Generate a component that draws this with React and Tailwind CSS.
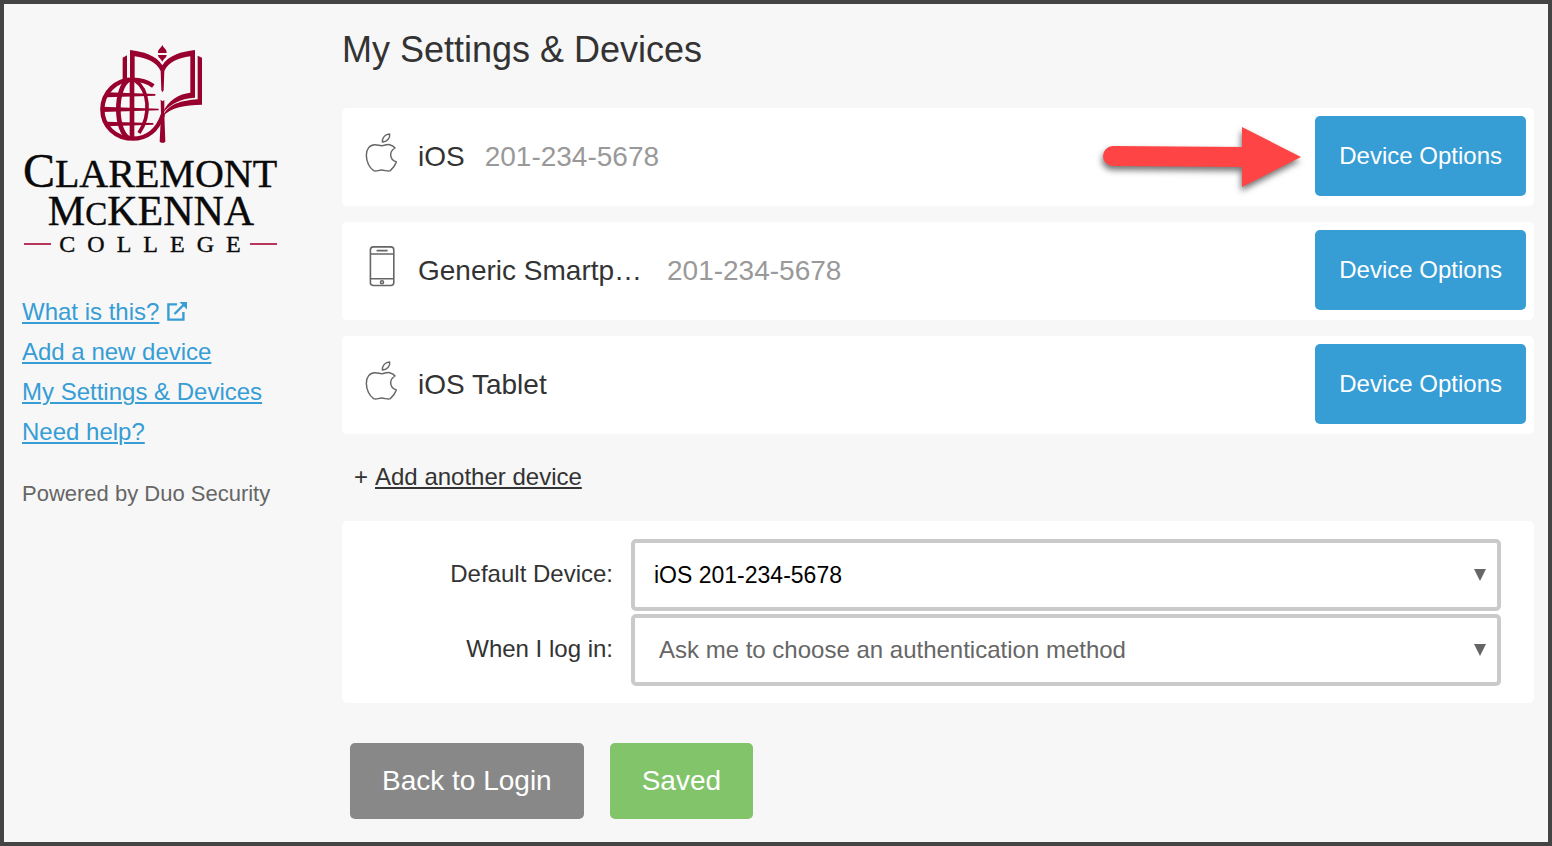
import React from "react"
import { useState } from 'react';

function CollegeLogo() {
    return (
        <svg viewBox="0 0 258 220" className="block w-[258px] h-[220px]" role="img" aria-label="Claremont McKenna College">
            <g transform="translate(68 -5) scale(0.3333)" fill="none" stroke="#98002e">
                {/* torch */}
                <path d="M217 29 C220 39 231 42 230 54 H204 C203 42 214 39 217 29 Z" fill="#98002e" stroke="none" />
                <path d="M204 60 H230 C229 69 221 71 217 80 C213 71 205 69 204 60 Z" fill="#98002e" stroke="none" />
                <path d="M212 194 L218 199 L223 195 L223 236 L226 320 Q218 327 209 320 L213 236 Z" fill="#98002e" stroke="none" />
                {/* book */}
                <path d="M120 45 C160 50 198 60 217 91 C236 60 274 50 315 45 V188 C275 190 245 204 218 234 C234 194 268 177 301 173 V64 C265 70 236 80 223 108 L221 166 L217 172 L214 166 L212 108 C199 80 170 70 134 64 V132 H120 Z" fill="#98002e" stroke="none" />
                <path d="M98 68 L111 61 V134 L98 140 Z" fill="#98002e" stroke="none" />
                <path d="M323 62 L336 68 V209 C285 210 243 216 219 244 C234 206 274 197 323 193 Z" fill="#98002e" stroke="none" />
                {/* globe */}
                <path d="M190 153 C170 138 148 134 127 134 C78 134 38 172 37 223 C37 275 78 311 127 311 C175 311 204 282 219 238" strokeWidth="13" />
                <path d="M126 132 V312" strokeWidth="14" />
                <path d="M118 133 C74 155 74 290 118 311" strokeWidth="14" />
                <path d="M134 135 C178 165 184 240 147 294" strokeWidth="11" />
                <path d="M50 172 L196 177 L196 182 L50 187 Z M36 215 L206 221 L206 226 L36 231 Z M48 260 L190 264 L190 269 L48 274 Z" fill="#98002e" stroke="none" />
            </g>
            <g fill="#0a0a0a" stroke="#0a0a0a" strokeWidth="0.4" fontFamily="'Liberation Serif', serif" textAnchor="middle">
                <text x="128" y="147" fontSize="40">
                    <tspan fontSize="48">C</tspan>LAREMONT
                </text>
                <text x="129" y="185" fontSize="42">
                    M<tspan fontSize="33">C</tspan>KENNA
                </text>
                <text x="128" y="212" fontSize="24">{"C\u00a0\u00a0O\u00a0\u00a0L\u00a0\u00a0L\u00a0\u00a0E\u00a0\u00a0G\u00a0\u00a0E"}</text>
            </g>
            <path d="M2 204 H29 M228 204 H255" stroke="#b8365c" strokeWidth="2" />
        </svg>
    )
}

function AppleIcon() {
    return (
        <svg viewBox="30 37 99 123" className="w-[33px] h-[41px]" fill="none" stroke="#666" strokeWidth="4.4" strokeLinejoin="round" aria-hidden="true">
            <path d="M104 43 C106 55 96 67 82 67 C81 54 91 43 104 43 Z" />
            <path d="M80 78 C90 78 94 73 104 75 C112 77 117 80 120 85 C112 90 107 96 107 105 C107 116 114 123 124 127 C120 138 113 147 106 153 C98 157 90 151 80 151 C70 151 64 157 56 153 C44 145 34 127 34 107 C34 88 44 75 60 75 C68 75 74 78 80 78 Z" />
        </svg>
    )
}

function PhoneIcon() {
    return (
        <svg viewBox="0 0 33 41" className="w-[33px] h-[41px]" fill="none" stroke="#666" strokeWidth="1.6" aria-hidden="true">
            <rect x="5.4" y="0.9" width="23.4" height="38.6" rx="3" />
            <path d="M5.4 8 H28.8 M5.4 32.8 H28.8 M11.6 4.6 H22.6" />
            <circle cx="17" cy="36.2" r="1.5" />
        </svg>
    )
}

function PointerArrow() {
    return (
        <svg viewBox="0 0 212 80" className="w-[212px] h-[80px] shrink-0 overflow-visible drop-shadow-[-1px_4px_3px_rgba(0,0,0,0.55)]" aria-hidden="true">
            <path d="M10 30 L139 31 V11 L198 41 L139 71 V51 L10 50 A10 10 0 0 1 10 30 Z" fill="#fe4444" />
        </svg>
    )
}

const deviceList = [
    { id: 1, icon: AppleIcon, name: 'iOS', phone: '201-234-5678', highlighted: true },
    { id: 2, icon: PhoneIcon, name: 'Generic Smartp…', phone: '201-234-5678', nameWidth: 'w-[229px]' },
    { id: 3, icon: AppleIcon, name: 'iOS Tablet' },
];

const linkStyle = "text-[#369dd5] underline decoration-2 underline-offset-2";

function SelectField({ id, label, value, options, onChange, className }) {
    return (
        <>
            <label htmlFor={id} className="pb-[2px] text-right text-[#333]">{label}</label>
            <div className="relative">
                <select
                    id={id}
                    value={value}
                    onChange={(e) => onChange(e.target.value)}
                    className={`block w-full h-[72px] appearance-none rounded-[5px] border-4 border-[#cacaca] bg-white pr-10 ${className}`}
                >
                    {options.map((option) => (
                        <option key={option}>{option}</option>
                    ))}
                </select>
                <svg viewBox="0 0 12 12" className="absolute right-[15px] top-[30px] size-3 pointer-events-none" aria-hidden="true">
                    <path d="M0 0 H12 L6 12 Z" fill="#666" />
                </svg>
            </div>
        </>
    )
}

function App() {
    const [defaultDevice, setDefaultDevice] = useState('iOS 201-234-5678');
    const [loginMethod, setLoginMethod] = useState('Ask me to choose an authentication method');

    return (
        <div className="flex min-h-screen border-4 border-[#444] bg-[#f7f7f7] pl-[18px] pr-[14px] font-['Liberation_Sans',Arial,sans-serif] text-2xl">
            <aside className="w-[320px] shrink-0 pt-9">
                <CollegeLogo />
                <nav className="mt-8 flex flex-col items-start leading-10">
                    <div className="flex items-center gap-2">
                        <a href="#what" className={linkStyle}>What is this?</a>
                        <svg viewBox="0 0 20 20" className="size-5" fill="none" stroke="#369dd5" strokeWidth="2.4" aria-hidden="true">
                            <path d="M10 2.4 H1.4 V17.6 H16.4 V10 M7.5 12 L17 2.5" />
                            <path d="M12.5 0 H20 V7.5 Z" fill="#369dd5" stroke="none" />
                        </svg>
                    </div>
                    <a href="#add" className={linkStyle}>Add a new device</a>
                    <a href="#settings" className={linkStyle}>My Settings &amp; Devices</a>
                    <a href="#help" className={linkStyle}>Need help?</a>
                </nav>
                <p className="mt-7 text-[22px] leading-7 text-[#666]">Powered by Duo Security</p>
            </aside>

            <main className="min-w-0 flex-1 pt-6 pb-[23px]">
                <h1 className="text-4xl leading-[44px] text-[#333]">My Settings &amp; Devices</h1>

                <ul className="mt-9 flex flex-col gap-4">
                    {deviceList.map((item) => (
                        <li key={item.id} className="flex items-center gap-5 rounded-[5px] bg-white pt-2 pb-[10px] pl-[23px] pr-2 text-[28px]">
                            <div className="mb-2 shrink-0">
                                <item.icon />
                            </div>
                            <span className={`truncate pt-[2px] text-[#333] ${item.nameWidth ?? ''}`}>{item.name}</span>
                            {item.phone && <span className="pt-[2px] text-[#999]">{item.phone}</span>}
                            <div className="ml-auto flex items-center">
                                {item.highlighted && <PointerArrow />}
                                <button type="button" className="h-20 shrink-0 rounded-[5px] bg-[#369dd5] px-6 text-2xl text-white">
                                    Device Options
                                </button>
                            </div>
                        </li>
                    ))}
                </ul>

                <p className="mt-[27px] flex gap-[7px] pl-3 leading-8 text-[#333]">
                    <span>+</span>
                    <a href="#another" className="underline decoration-2 underline-offset-2">Add another device</a>
                </p>

                <form className="mt-7 grid grid-cols-[271px_1fr] items-center gap-x-[18px] gap-y-[3px] rounded-[5px] bg-white pt-[18px] pr-[33px] pb-[17px]">
                    <SelectField
                        id="default_device"
                        label="Default Device:"
                        value={defaultDevice}
                        options={['iOS 201-234-5678', 'Generic Smartphone 201-234-5678', 'iOS Tablet']}
                        onChange={setDefaultDevice}
                        className="pl-[19px] text-[23px] text-black"
                    />
                    <SelectField
                        id="login_method"
                        label="When I log in:"
                        value={loginMethod}
                        options={['Ask me to choose an authentication method', 'Automatically send this device a Duo Push']}
                        onChange={setLoginMethod}
                        className="pl-6 text-2xl text-[#666]"
                    />
                </form>

                <div className="mt-10 flex gap-[26px] pl-2 text-[28px] text-white">
                    <button type="button" className="h-[76px] rounded-[5px] bg-[#888] px-8">Back to Login</button>
                    <button type="button" className="h-[76px] rounded-[5px] bg-[#81c46a] px-8">Saved</button>
                </div>
            </main>
        </div>
    )
}

export default App
